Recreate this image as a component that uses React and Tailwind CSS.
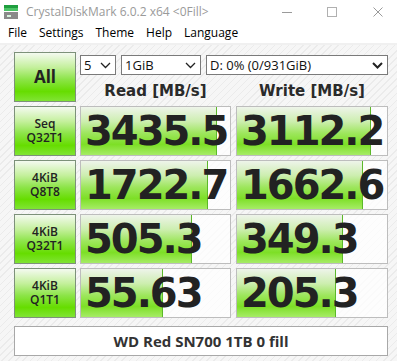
import React from 'react';

const rows = [
  { label: 'Seq\nQ32T1', read: '3435.5', rw: 136, write: '3112.2', ww: 134 },
  { label: '4KiB\nQ8T8', read: '1722.7', rw: 127, write: '1662.6', ww: 126 },
  { label: '4KiB\nQ32T1', read: '505.3', rw: 111, write: '349.3', ww: 106 },
  { label: '4KiB\nQ1T1', read: '55.63', rw: 82, write: '205.3', ww: 99 },
];

const greenBox =
  'border border-[#7d917a] bg-[linear-gradient(to_bottom,#f4faf0_0%,#c4f09c_30%,#8ce448_55%,#66dd00_80%,#80e434_100%)]';

const Chevron = ({ bold }) => (
  <svg width="11" height="7" viewBox="0 0 11 7" className="shrink-0">
    <polyline
      points="1,1 5.5,5.5 10,1"
      fill="none"
      stroke="#222"
      strokeWidth={bold ? 2 : 1.3}
    />
  </svg>
);

const Select = ({ value, width, bold }) => (
  <div
    className={`${width} h-[20px] border border-[#7a7a7a] bg-white flex items-center justify-between pl-[3px] pr-[4px] text-[13px] leading-none text-[#111]`}
  >
    <span>{value}</span>
    <Chevron bold={bold} />
  </div>
);

const Value = ({ text, fill, width }) => (
  <div className={`relative ${width} h-[50px] border border-[#bdbdbd] bg-white/75 flex items-center overflow-hidden`}>
    <div
      className="absolute left-0 top-0 bottom-0 border-r border-[#5cb82a] bg-[linear-gradient(to_bottom,#eef4ea_0%,#cdeeb0_30%,#9de65c_55%,#7ddf26_78%,#a6ec66_100%)]"
      style={{ width: fill }}
    />
    <span className="relative pl-[4px] font-['DejaVu_Sans',sans-serif] font-bold text-[40px] leading-none tracking-[-2px] text-[#222]">
      {text}
    </span>
  </div>
);

export default function App() {
  return (
    <div className="w-[397px] h-[361px] bg-white flex flex-col font-['Open_Sans',sans-serif] overflow-hidden">
      {/* title bar */}
      <div className="h-[23px] flex items-center shrink-0">
        <svg width="16" height="16" viewBox="0 0 16 16" className="ml-[3px]">
          <rect x="1" y="1" width="14" height="3" fill="#1f9e3e" />
          <rect x="1" y="4" width="14" height="3" fill="#4cc466" />
          <rect x="1" y="8" width="14" height="7" fill="#8a8a8a" />
          <rect x="4" y="11" width="4" height="2" fill="#d9f2de" />
        </svg>
        <span className="ml-[7px] text-[12px] text-[#9a9a9a]">CrystalDiskMark 6.0.2 x64 &lt;0Fill&gt;</span>
        <div className="ml-auto mr-[14px] flex items-center">
          <svg width="10" height="10" viewBox="0 0 10 10">
            <line x1="0" y1="5.5" x2="10" y2="5.5" stroke="#9a9a9a" strokeWidth="1" />
          </svg>
          <svg width="10" height="10" viewBox="0 0 10 10" className="ml-[35px]">
            <rect x="0.5" y="0.5" width="9" height="9" fill="none" stroke="#b0b0b0" strokeWidth="1" />
          </svg>
          <svg width="10" height="10" viewBox="0 0 10 10" className="ml-[36px]">
            <path d="M0.5 0.5 L9.5 9.5 M9.5 0.5 L0.5 9.5" stroke="#9a9a9a" strokeWidth="1" />
          </svg>
        </div>
      </div>

      {/* menu */}
      <div className="h-[20px] flex items-center gap-[12px] pl-[8px] text-[12px] text-black shrink-0">
        <span>File</span>
        <span>Settings</span>
        <span>Theme</span>
        <span>Help</span>
        <span>Language</span>
      </div>

      {/* main */}
      <div className="flex-1 border-t-2 border-[#f0f0f0] bg-[repeating-linear-gradient(135deg,#f6f6f6_0px,#f6f6f6_4px,#ebebeb_4px,#ebebeb_5px)] pl-[14px] pt-[7px]">
        <div className="flex">
          <div className={`w-[62px] h-[50px] ${greenBox} flex items-center justify-center font-bold text-[17px] text-[#222]`}>
            All
          </div>
          <div className="ml-[4px] w-[308px] flex flex-col">
            <div className="mt-[3px] flex gap-[5px]">
              <Select value="5" width="w-[36px]" />
              <Select value="1GiB" width="w-[80px]" />
              <Select value="D: 0% (0/931GiB)" width="w-[182px]" bold />
            </div>
            <div className="mt-[9px] flex font-['DejaVu_Sans',sans-serif] font-bold text-[15px] leading-none text-[#2a2a2a]">
              <div className="w-[151px] text-center">Read [MB/s]</div>
              <div className="ml-[5px] w-[152px] text-center">Write [MB/s]</div>
            </div>
          </div>
        </div>

        <div className="mt-[4px] flex flex-col gap-[4px]">
          {rows.map((r, i) => (
            <div key={i} className="flex">
              <div className={`w-[62px] h-[50px] ${greenBox} flex items-center justify-center`}>
                <p className="whitespace-pre-line text-center font-semibold text-[12px] leading-[14px] text-[#222]">
                  {r.label}
                </p>
              </div>
              <div className="ml-[4px]">
                <Value text={r.read} fill={r.rw} width="w-[151px]" />
              </div>
              <div className="ml-[5px]">
                <Value text={r.write} fill={r.ww} width="w-[152px]" />
              </div>
            </div>
          ))}
        </div>

        <div className="mt-[8px] w-[374px] h-[30px] border border-[#a8a8a8] bg-white flex items-center justify-center font-bold text-[15px] text-[#333]">
          WD Red SN700 1TB 0 fill
        </div>
      </div>
    </div>
  );
}
